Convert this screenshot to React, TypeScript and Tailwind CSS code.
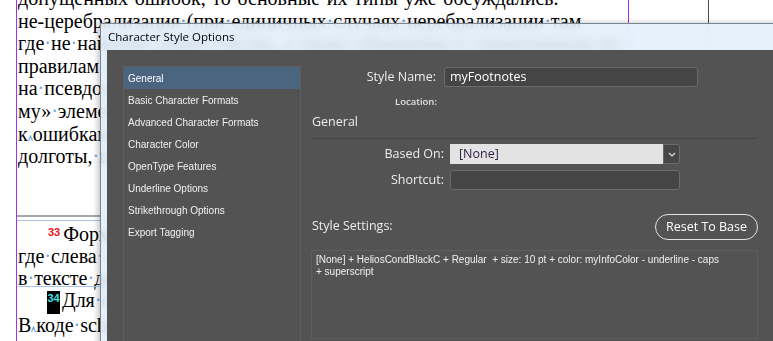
import React from 'react';

const mainLines = [
  'допущенных ошибок, то основные их типы уже обсуждались.',
  'не-церебрализация (при единичных случаях неребрализации там',
  'где не найдены знаки сноски, а также обращения к справочникам по',
  'правилам набора. Ещё одна группа ошибок связана с переходом',
  'на псевдосимволы и замену «родного» стиля на «чужой» стиль',
  'му» элементу, что в итоге приводит к неверной разметке и',
  'к^ошибкам при подсчёте знаков, особенно для значений',
  'долготы, широты и прочих координат в таблицах',
];

const categories = [
  'General',
  'Basic Character Formats',
  'Advanced Character Formats',
  'Character Color',
  'OpenType Features',
  'Underline Options',
  'Strikethrough Options',
  'Export Tagging',
];

function Dot() {
  return <span className="text-[#6fa6ea]">·</span>;
}

function Caret() {
  return (
    <svg width="5" height="6" viewBox="0 0 5 6" className="inline-block align-baseline">
      <polyline points="0.5,6 2.5,1 4.5,6" fill="none" stroke="#6fa6ea" strokeWidth="1.2" />
    </svg>
  );
}

// words joined by InDesign's hidden-character markers
function Marked({ text }: { text: string }) {
  const parts = text.split(/([ ^])/);
  return (
    <>
      {parts.map((p, i) =>
        p === ' ' ? <Dot key={i} /> : p === '^' ? <Caret key={i} /> : <span key={i}>{p}</span>
      )}
    </>
  );
}

function Document() {
  return (
    <div className="flex h-full pl-[16px] font-['Liberation_Serif',serif] text-[20px] text-black">
      <div className="h-full w-[613px] border-x border-[#9b30ff]">
        <div className="mt-[-13px] pl-[1px] leading-[22.6px]">
          {mainLines.map((l, i) => (
            <div key={i} className="whitespace-nowrap">
              <Marked text={l} />
            </div>
          ))}
        </div>
        <div className="mt-[47px] h-[2px] bg-[#a6a6a6]" />
        <div className="mt-[3px] h-[1px] bg-[#a3c5ee]" />
        <div className="pl-[1px] leading-[22px]">
          <div className="whitespace-nowrap pl-[30px]">
            <span className="mr-[3px] font-['Liberation_Sans',sans-serif] text-[11px] font-bold align-[5px] text-[#e8101a]">33</span>
            <Marked text="Формат сносок задаётся стилем абзаца myFootnotes," />
          </div>
          <div className="whitespace-nowrap">
            <Marked text="где слева – номер сноски, набранный стилем символа," />
          </div>
          <div className="relative whitespace-nowrap">
            <Marked text="в тексте документа номер оформлен тем же стилем" />
            <div className="absolute bottom-[2px] left-0 right-0 h-[1px] bg-[#a3c5ee]" />
          </div>
          <div className="whitespace-nowrap pl-[29px]">
            <span className="mr-[2px] inline-block h-[23px] w-[13px] bg-black text-center font-['Liberation_Sans',sans-serif] text-[11px] font-bold leading-[14px] align-[5px] text-[#3fe2e2]">34</span>
            <Marked text="Для оформления номеров используется стиль" />
          </div>
          <div className="whitespace-nowrap">
            <Marked text="В^коде schema описаны все параметры стиля" />
          </div>
        </div>
      </div>
      <div className="h-full w-[80px] border-r border-[#4a4a4a]" />
    </div>
  );
}

function Dialog() {
  return (
    <div className="absolute left-[100px] top-[23px] flex h-[340px] w-[700px] flex-col border-l border-t border-[#7a8694] bg-[#e2eefa]/85 shadow-[-2px_0_6px_rgba(0,0,0,0.25)] backdrop-blur-[5px]">
      <div className="flex h-[26px] shrink-0 items-center pl-[7px] font-['Open_Sans',sans-serif] text-[11.5px] text-black">
        Character Style Options
      </div>
      <div className="ml-[6px] flex flex-1 bg-[#535353] pl-[16px] pt-[16px] text-[#ececec]">
        {/* category list */}
        <div className="w-[178px] shrink-0 border border-[#5e5e5e] font-['Liberation_Sans',sans-serif] text-[10px]">
          {categories.map((c, i) => (
            <div
              key={c}
              className={
                'flex h-[22px] items-center pl-[4px] ' + (i === 0 ? 'bg-[#4b6581] text-white' : 'text-[#f0f0f0]')
              }
            >
              {c}
            </div>
          ))}
        </div>

        {/* settings panel */}
        <div className="ml-[10px] w-[447px] shrink-0 font-['Open_Sans',sans-serif] text-[12.5px]">
          <div className="mt-[1px] flex items-center">
            <div className="w-[125px] text-right">Style Name:</div>
            <div className="ml-[8px] h-[20px] w-[254px] rounded-[3px] border border-[#6b6b6b] bg-[#454545] pl-[5px] leading-[18px] text-white">
              myFootnotes
            </div>
          </div>
          <div className="mt-[9px] flex h-[12px] items-center">
            <div className="w-[126px] text-right text-[9.5px] font-semibold leading-[12px] text-[#e0e0e0]">Location:</div>
          </div>
          <div className="mt-[5px] h-[18px] pl-[1px] leading-[18px]">General</div>
          <div className="mt-[7px] h-[1px] w-[446px] bg-[#464646]" />

          <div className="mt-[5px] flex items-center">
            <div className="w-[133px] text-right">Based On:</div>
            <div className="ml-[6px] flex h-[20px] w-[230px]">
              <div className="flex-1 bg-[#e3e3e3] pl-[9px] leading-[20px] text-[#2b1d44]">[None]</div>
              <div className="flex w-[17px] items-center justify-center rounded-r-[3px] border border-[#6b6b6b] bg-[#474747]">
                <svg width="8" height="5" viewBox="0 0 8 5">
                  <polyline points="1,1 4,4 7,1" fill="none" stroke="#e0e0e0" strokeWidth="1.1" />
                </svg>
              </div>
            </div>
          </div>
          <div className="mt-[6px] flex items-center">
            <div className="w-[133px] text-right">Shortcut:</div>
            <div className="ml-[6px] h-[20px] w-[230px] rounded-[3px] border border-[#6b6b6b] bg-[#454545]" />
          </div>

          <div className="mt-[24px] flex items-center justify-between">
            <div className="pl-[1px] pb-[2px]">Style Settings:</div>
            <div className="flex h-[26px] w-[103px] items-center justify-center rounded-full border-[1.5px] border-[#e2e2e2] text-white">
              Reset To Base
            </div>
          </div>
          <div className="mt-[10px] h-[89px] w-[447px] border border-[#5e5e5e] px-[4px] pt-[3px] font-['Liberation_Sans',sans-serif] text-[10px] leading-[12px] text-[#f0f0f0]">
            <div>[None] + HeliosCondBlackC + Regular&nbsp; + size: 10 pt + color: myInfoColor - underline - caps</div>
            <div>+ superscript</div>
          </div>
        </div>
      </div>
    </div>
  );
}

export default function App() {
  return (
    <div className="relative h-[341px] w-[773px] overflow-hidden bg-white">
      <Document />
      <Dialog />
    </div>
  );
}
